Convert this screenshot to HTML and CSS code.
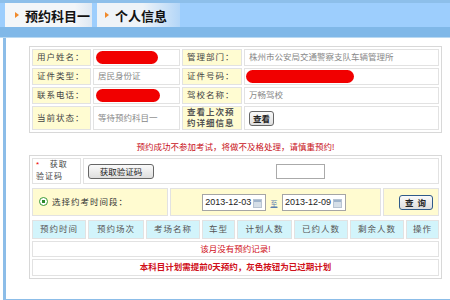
FILE: index.html
```html
<!DOCTYPE html>
<html lang="zh-CN">
<head>
    <meta charset="UTF-8">
    <title>预约科目一</title>
    <link rel="stylesheet" href="styles.css">
</head>
<body>
    <div class="top">
        <div class="tab tab-on"><span class="arrow"></span>预约科目一</div>
        <div class="tab tab-off"><span class="arrow"></span>个人信息</div>
    </div>

    <div class="panel">
        <table class="info">
            <tr>
                <td class="lab w1">用户姓名：</td>
                <td class="val w2"><span class="blot blot-name"></span></td>
                <td class="lab w3">管理部门：</td>
                <td class="val w4">株州市公安局交通警察支队车辆管理所</td>
            </tr>
            <tr>
                <td class="lab">证件类型：</td>
                <td class="val">居民身份证</td>
                <td class="lab">证件号码：</td>
                <td class="val"><span class="blot blot-id"></span></td>
            </tr>
            <tr>
                <td class="lab">联系电话：</td>
                <td class="val"><span class="blot blot-phone"></span></td>
                <td class="lab">驾校名称：</td>
                <td class="val">万畅驾校</td>
            </tr>
            <tr class="tall">
                <td class="lab">当前状态：</td>
                <td class="val">等待预约科目一</td>
                <td class="lab lab-bold">查看上次预约详细信息</td>
                <td class="val"><button class="btn btn-look">查看</button></td>
            </tr>
        </table>

        <p class="notice">预约成功不参加考试，将做不及格处理，请慎重预约!</p>

        <div class="box">
            <table class="verify">
                <tr>
                    <td class="vlab"><span class="star">*</span>&nbsp;&nbsp;&nbsp;获取<br>验证码</td>
                    <td class="vbody"><button class="btn btn-code">获取验证码</button><input class="code" type="text"></td>
                </tr>
            </table>

            <table class="range">
                <tr>
                    <td class="pick"><span class="radio"></span>选择约考时间段：</td>
                    <td class="dates">
                        <span class="date">2013-12-03<span class="cal"></span></span>
                        <span class="to">至</span>
                        <span class="date">2013-12-09<span class="cal"></span></span>
                    </td>
                    <td class="go"><button class="btn btn-query">查 询</button></td>
                </tr>
            </table>

            <table class="list">
                <tr class="head">
                    <td class="c1">预约时间</td>
                    <td class="c2">预约场次</td>
                    <td class="c3">考场名称</td>
                    <td class="c4">车型</td>
                    <td class="c5">计划人数</td>
                    <td class="c6">已约人数</td>
                    <td class="c7">剩余人数</td>
                    <td class="c8">操作</td>
                </tr>
                <tr>
                    <td colspan="8" class="empty">该月没有预约记录!</td>
                </tr>
                <tr>
                    <td colspan="8" class="tip">本科目计划需提前0天预约，灰色按钮为已过期计划</td>
                </tr>
            </table>
        </div>
    </div>
</body>
</html>
```

FILE: styles.css
```css
html, body {
    margin: 0;
    width: 450px;
    height: 300px;
    overflow: hidden;
    background: #fff;
    font-family: "Liberation Sans", "Noto Sans CJK SC", sans-serif;
}
.top {
    height: 38px;
    box-sizing: border-box;
    padding: 3px 0 0 5px;
    display: flex;
    gap: 5px;
    background: linear-gradient(to bottom, #8dbfea 0, #8dbfea 3px, #9dcefd 3px, #9dcefd 27px, #80b8e8 27px, #80b8e8 37px, #b9d9f2 37px);
}
.tab {
    height: 24px;
    display: flex;
    align-items: center;
    font-family: "Noto Sans CJK SC", sans-serif;
    font-size: 13px;
    font-weight: bold;
    color: #111;
    box-sizing: border-box;
}
.tab-on {
    width: 87px;
    padding-left: 10px;
    background: linear-gradient(to right, #f3f6f9 80%, #dde8f3);
}
.tab-off {
    width: 83px;
    padding-left: 8px;
    background: linear-gradient(to right, #eef3f8 55%, #b3d6f8);
}
.arrow {
    width: 0;
    height: 0;
    border-top: 3px solid transparent;
    border-bottom: 3px solid transparent;
    border-left: 4px solid #f08a2c;
    margin-right: 6px;
}
.panel {
    margin-left: 3px;
    height: 253px;
    border-left: 3px solid #8cbde8;
    border-bottom: 4px solid #8cbde8;
    padding: 8px 0 0 23px;
    box-sizing: content-box;
}
table {
    border-collapse: separate;
    border-spacing: 2px;
    table-layout: fixed;
}
td {
    box-sizing: border-box;
    border: 1px solid #e2e2e2;
    font-size: 8.5px;
    line-height: 11px;
}
.info {
    width: 413px;
    border: 1px solid #d8d8d8;
}
.info td {
    height: 17px;
    padding: 2px 4px;
}
.info .tall td {
    height: 24px;
    padding: 0 4px;
}
.w1 { width: 59px; }
.w2 { width: 87px; }
.w3 { width: 60px; }
.lab {
    background: #fffcd2;
    color: #444;
    letter-spacing: 1px;
}
.lab-bold {
    font-weight: bold;
    color: #555;
}
.val {
    background: #fff;
    color: #888;
}
.blot {
    display: inline-block;
    vertical-align: middle;
    height: 13px;
    margin: -3px 0;
    background: #f10000;
    border-radius: 7px;
    filter: blur(0.6px);
}
.blot-name { width: 62px; margin-left: -2px; }
.blot-id { width: 108px; margin-left: -3px; }
.blot-phone { width: 64px; margin-left: -2px; }
.btn {
    font-family: "Noto Sans CJK SC", sans-serif;
    font-size: 8.5px;
    line-height: 11px;
    color: #222;
    background: linear-gradient(to bottom, #fafafa, #dedede);
    border: 1px solid #666;
    border-radius: 3px;
    padding: 1px 4px;
    margin: 0;
    vertical-align: middle;
    cursor: pointer;
}
.btn-look {
    font-weight: bold;
    padding: 1px 3px;
}
.notice {
    width: 413px;
    margin: 8px 0 2px;
    text-align: center;
    font-size: 8.5px;
    line-height: 12px;
    color: #c8101a;
}
.box {
    width: 413px;
    box-sizing: border-box;
    border: 1px solid #d8d8d8;
}
.box table {
    width: 100%;
}
.vlab {
    width: 49px;
    height: 25px;
    padding: 0 3px;
    font-size: 8px;
    line-height: 12px;
    color: #444;
    letter-spacing: 1px;
}
.star {
    color: #e00;
}
.vbody {
    padding: 0 4px;
}
.btn-code {
    width: 66px;
    padding: 1px 0;
}
.code {
    width: 49px;
    height: 15px;
    box-sizing: border-box;
    margin: 0 0 0 122px;
    vertical-align: middle;
    border: 1px solid #aaa;
    padding: 0;
}
.range td {
    background: #fffbd0;
    height: 28px;
}
.pick {
    width: 136px;
    padding-left: 6px;
    color: #333;
    letter-spacing: 1px;
}
.radio {
    display: inline-block;
    vertical-align: -1px;
    width: 7px;
    height: 7px;
    border: 1px solid #3a9a3a;
    border-radius: 50%;
    margin-right: 4px;
    background: radial-gradient(circle, #2a8a2a 0, #2a8a2a 1.6px, #fff 2px);
}
.dates {
    width: 211px;
    text-align: center;
    padding-right: 4px;
}
.date {
    display: inline-block;
    vertical-align: middle;
    width: 64px;
    height: 17px;
    box-sizing: border-box;
    border: 1px solid #a5a5a5;
    background: #fff;
    font-size: 9px;
    line-height: 15px;
    color: #222;
    text-align: left;
    padding-left: 2px;
    position: relative;
}
.cal {
    position: absolute;
    right: 3px;
    top: 4px;
    width: 7px;
    height: 7px;
    background: linear-gradient(to bottom, #9fb4cc 0, #9fb4cc 2px, #d6dfe8 2px);
    border: 1px solid #b8c4d2;
}
.to {
    display: inline-block;
    vertical-align: middle;
    font-size: 7px;
    color: #5a7fb0;
    text-decoration: underline;
    margin: 2px 2px 0;
}
.go {
    text-align: right;
    padding-right: 5px;
}
.btn-query {
    font-weight: bold;
    border-color: #2f5a8a;
    padding: 1px 5px;
    letter-spacing: 1px;
}
.list .head td {
    background: #d2f4fb;
    height: 19px;
    text-align: center;
    color: #555;
    letter-spacing: 1px;
}
.c1 { width: 54px; }
.c2 { width: 56px; }
.c3 { width: 54px; }
.c4 { width: 33px; }
.c5 { width: 55px; }
.c6 { width: 54px; }
.c7 { width: 54px; }
.empty, .tip {
    text-align: center;
    height: 16px;
    padding: 0;
    color: #d0101a;
}
.tip {
    height: 17px;
    font-weight: bold;
}
```
